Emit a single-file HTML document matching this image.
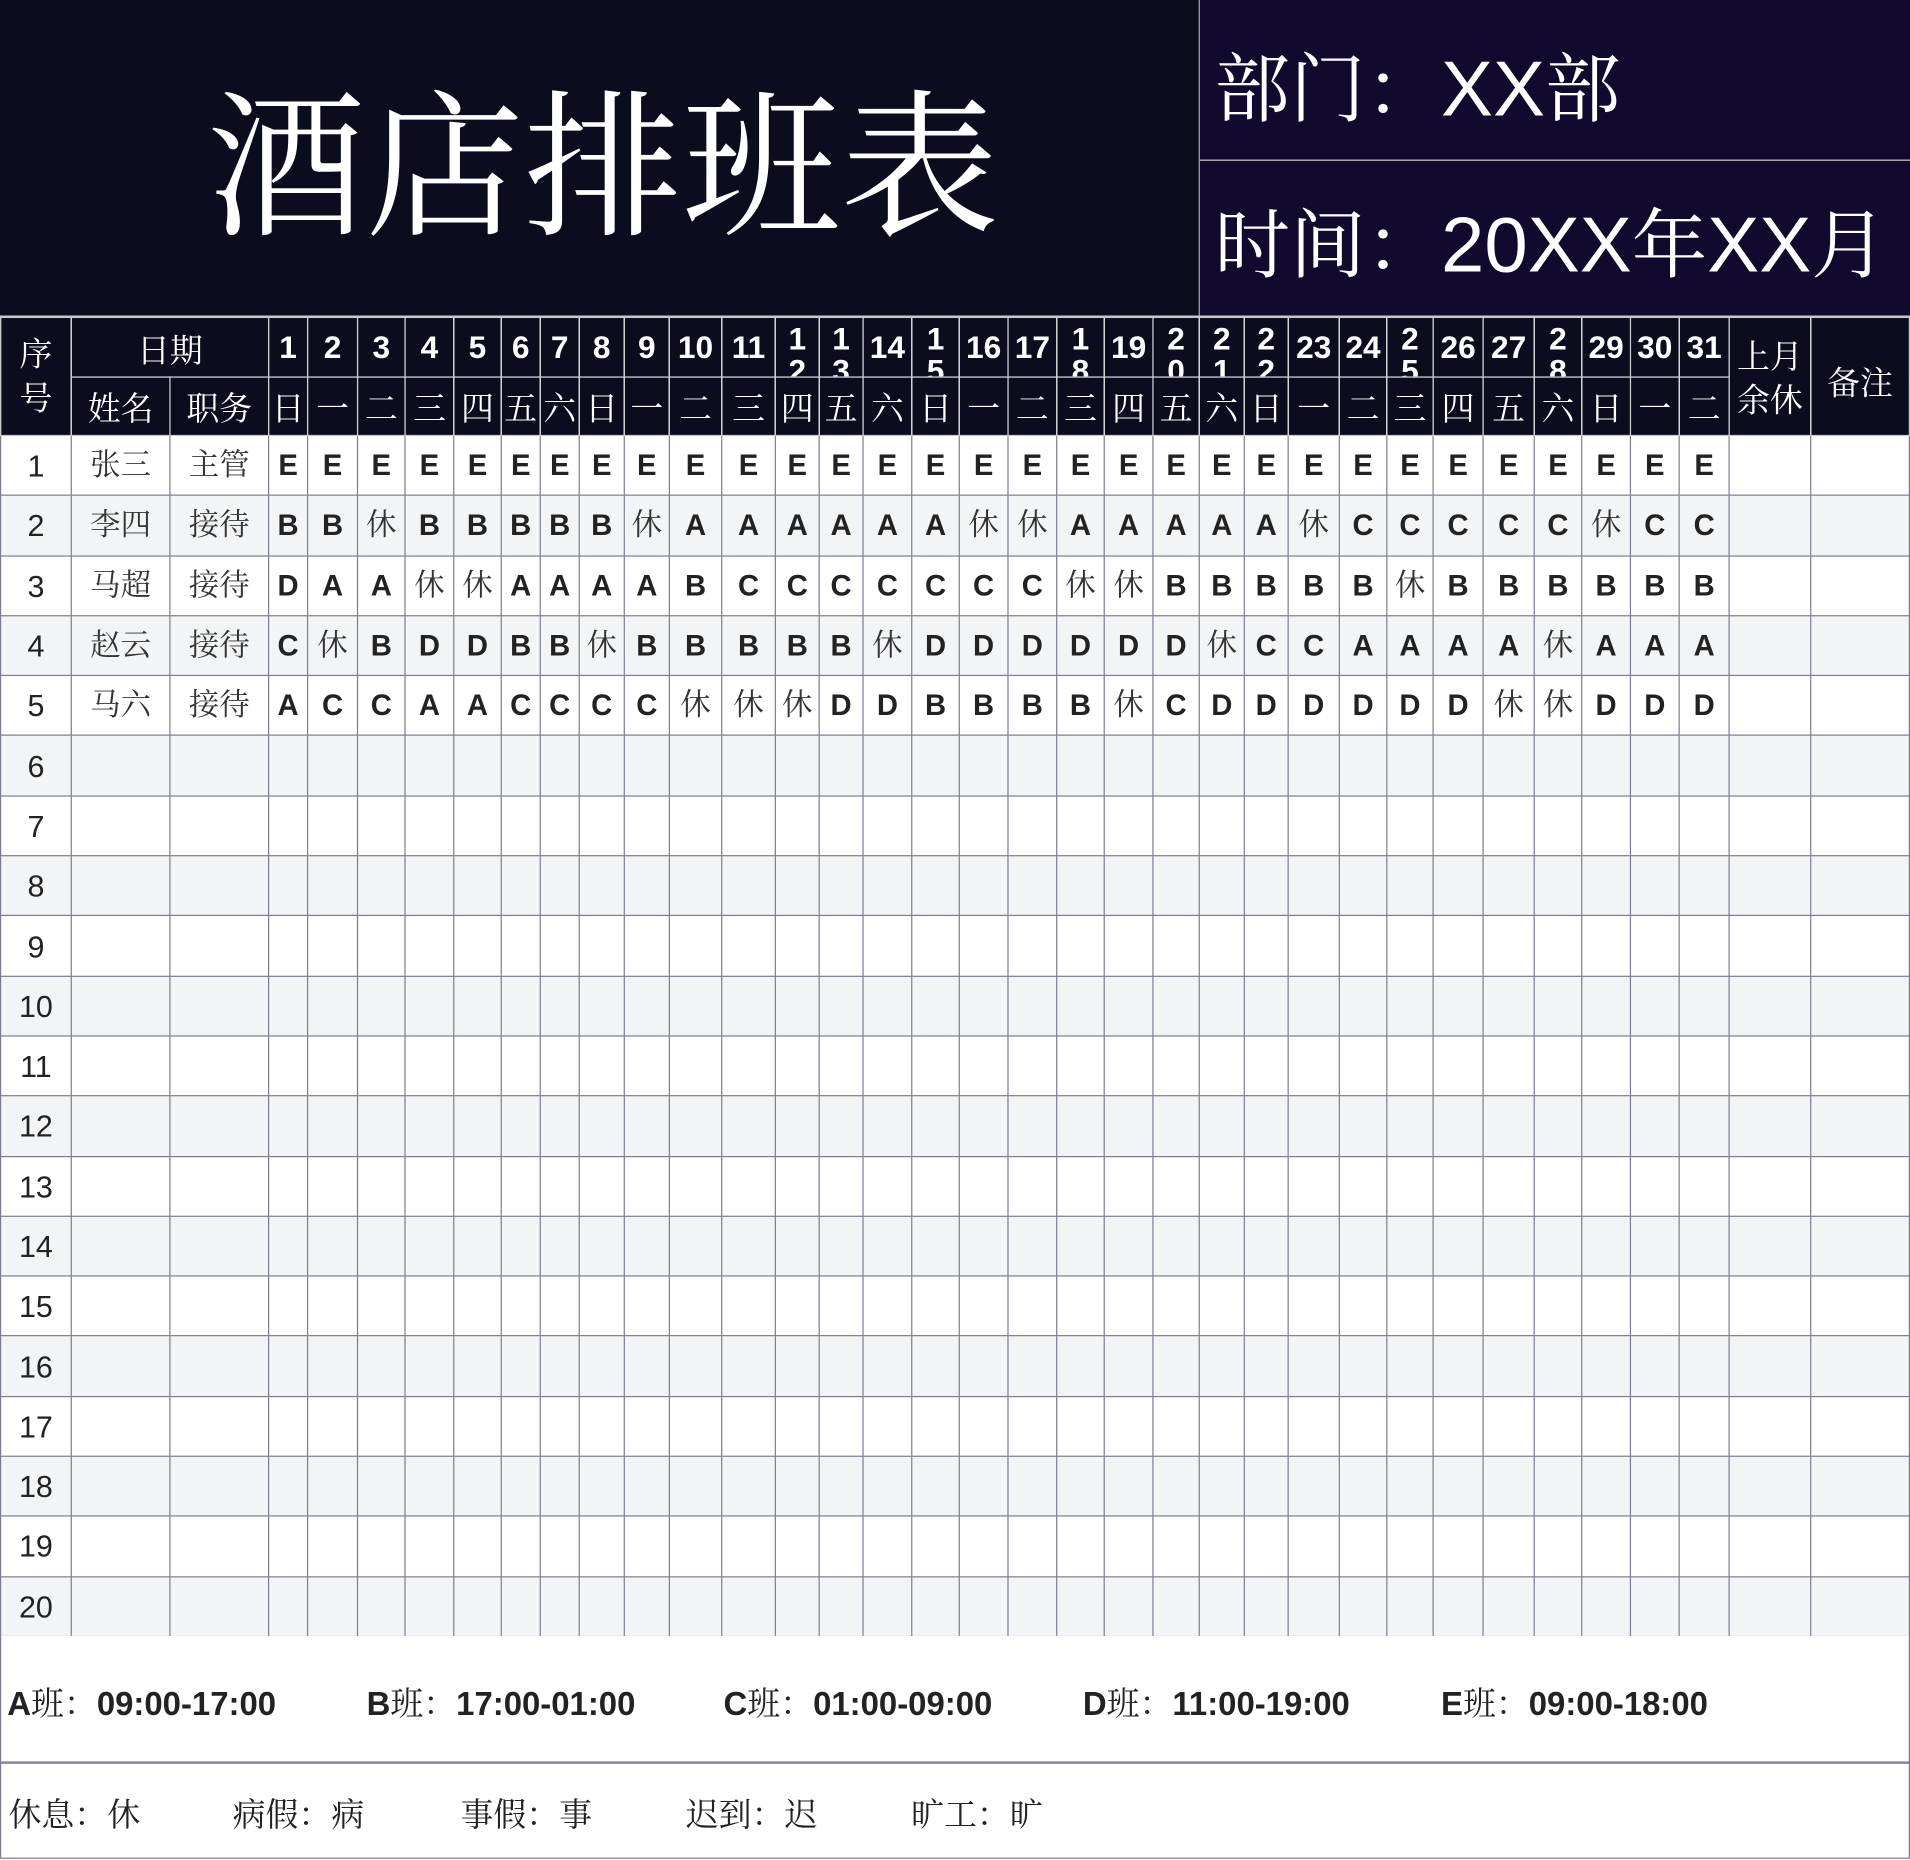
<!DOCTYPE html>
<html><head><meta charset="utf-8"><style>
html,body{margin:0;padding:0;background:#fff;overflow:hidden}
#w{position:absolute;left:0;top:0;width:1568px;height:1527px;transform:scale(1.21811);transform-origin:0 0;font-family:"Liberation Sans","Noto Sans CJK SC",sans-serif}
.s{font-family:"Liberation Serif","Noto Serif CJK SC",serif}
#top{position:absolute;left:0;top:0;width:1568px;height:259px;background:#0b0d1f;border-bottom:1px solid #ccc}
#right{position:absolute;left:984px;top:0;width:584px;height:259px;background:#110a2e;border-left:1px solid #aaa}
#right .l{position:absolute;left:0;top:131px;width:584px;height:1px;background:#ccc}
#title{position:absolute;left:150px;top:60px;width:690px;text-align:center;color:#fff;font-size:130px;line-height:160px;white-space:nowrap}
.rt{position:absolute;left:12px;color:#fff;font-size:62px;white-space:nowrap}
.rt b{font-family:"Liberation Sans",sans-serif;font-weight:normal;font-size:64px}
table{position:absolute;left:0;top:260px;border-collapse:collapse;table-layout:fixed;width:1568px}
td{padding:0;text-align:center;vertical-align:middle;overflow:hidden;white-space:nowrap;border:1px solid #7b7e92;color:#222}
thead td{background:#0b0d1f;color:#fff;border-color:#c9c9cf}
.h1 td{height:48px}
.h2 td{height:47px}
.dn{font-weight:bold;font-size:26px;font-family:"Liberation Sans",sans-serif}
.wd{font-size:27px}
.wr div{height:48px;overflow:hidden;line-height:26px;padding-top:4px;box-sizing:border-box;white-space:normal;font-weight:bold;font-size:26px}
tbody td{height:48.3px;font-size:24px;line-height:28px}
tbody td:not(:empty){padding-top:2px;height:46.3px}
tbody tr:nth-child(even) td{background:#f3f4f6}
tbody td.n{font-size:25px;font-family:"Liberation Sans",sans-serif}
tbody td.c{font-family:"Liberation Serif","Noto Serif CJK SC",serif;font-size:25px;color:#333}
tbody td.k{font-weight:bold;font-family:"Liberation Sans","Noto Sans CJK SC",sans-serif;font-size:24px}
#f1{position:absolute;left:0;top:1343px;width:1566px;height:103px;border:1px solid #7b7e92;border-top:none;background:#fff}
#f2{position:absolute;left:0;top:1447px;width:1566px;height:77px;border:1px solid #7b7e92;border-top:1px solid #7b7e92}
.fa{position:absolute;top:34px;font-size:27px;font-weight:bold;color:#222;white-space:nowrap}
.fa i{font-style:normal;font-weight:normal;font-family:"Liberation Serif","Noto Serif CJK SC",serif}
.fb{position:absolute;top:20px;font-size:27px;color:#222;white-space:nowrap;font-family:"Liberation Serif","Noto Serif CJK SC",serif}
</style></head><body><div id="w">
<div id="top"><div id="title" class="s">酒店排班表</div>
<div id="right"><div class="l"></div>
<div class="rt s" style="top:24px">部门：<b>XX</b>部</div>
<div class="rt s" style="top:152px">时间：<b>20XX</b>年<b>XX</b>月</div></div></div>

<table>
<colgroup><col style="width:58px"><col style="width:81px"><col style="width:81px"><col style="width:32px"><col style="width:41px"><col style="width:39px"><col style="width:40px"><col style="width:39px"><col style="width:32px"><col style="width:32px"><col style="width:37px"><col style="width:37px"><col style="width:43px"><col style="width:44px"><col style="width:36px"><col style="width:36px"><col style="width:40px"><col style="width:39px"><col style="width:40px"><col style="width:40px"><col style="width:39px"><col style="width:40px"><col style="width:38px"><col style="width:37px"><col style="width:36px"><col style="width:42px"><col style="width:39px"><col style="width:38px"><col style="width:41px"><col style="width:42px"><col style="width:39px"><col style="width:40px"><col style="width:40px"><col style="width:41px"><col style="width:67px"><col style="width:81px"></colgroup>
<thead>
<tr class="h1"><td rowspan="2" class="s" style="font-size:27px;line-height:36px;white-space:normal">序<br>号</td><td colspan="2" class="s" style="font-size:27px">日期</td>
<td class="dn">1</td><td class="dn">2</td><td class="dn">3</td><td class="dn">4</td><td class="dn">5</td><td class="dn">6</td><td class="dn">7</td><td class="dn">8</td><td class="dn">9</td><td class="dn">10</td><td class="dn">11</td><td class="wr"><div>1<br>2</div></td><td class="wr"><div>1<br>3</div></td><td class="dn">14</td><td class="wr"><div>1<br>5</div></td><td class="dn">16</td><td class="dn">17</td><td class="wr"><div>1<br>8</div></td><td class="dn">19</td><td class="wr"><div>2<br>0</div></td><td class="wr"><div>2<br>1</div></td><td class="wr"><div>2<br>2</div></td><td class="dn">23</td><td class="dn">24</td><td class="wr"><div>2<br>5</div></td><td class="dn">26</td><td class="dn">27</td><td class="wr"><div>2<br>8</div></td><td class="dn">29</td><td class="dn">30</td><td class="dn">31</td>
<td rowspan="2" class="s" style="font-size:27px;line-height:36px;white-space:normal;vertical-align:top;padding-top:14px">上月<br>余休</td><td rowspan="2" class="s" style="font-size:27px;vertical-align:top;padding-top:32px">备注</td></tr>
<tr class="h2 s"><td class="wd">姓名</td><td class="wd">职务</td>
<td class="wd">日</td><td class="wd">一</td><td class="wd">二</td><td class="wd">三</td><td class="wd">四</td><td class="wd">五</td><td class="wd">六</td><td class="wd">日</td><td class="wd">一</td><td class="wd">二</td><td class="wd">三</td><td class="wd">四</td><td class="wd">五</td><td class="wd">六</td><td class="wd">日</td><td class="wd">一</td><td class="wd">二</td><td class="wd">三</td><td class="wd">四</td><td class="wd">五</td><td class="wd">六</td><td class="wd">日</td><td class="wd">一</td><td class="wd">二</td><td class="wd">三</td><td class="wd">四</td><td class="wd">五</td><td class="wd">六</td><td class="wd">日</td><td class="wd">一</td><td class="wd">二</td></tr>
</thead>
<tbody>
<tr><td class="n">1</td><td class="c">张三</td><td class="c">主管</td><td class="k">E</td><td class="k">E</td><td class="k">E</td><td class="k">E</td><td class="k">E</td><td class="k">E</td><td class="k">E</td><td class="k">E</td><td class="k">E</td><td class="k">E</td><td class="k">E</td><td class="k">E</td><td class="k">E</td><td class="k">E</td><td class="k">E</td><td class="k">E</td><td class="k">E</td><td class="k">E</td><td class="k">E</td><td class="k">E</td><td class="k">E</td><td class="k">E</td><td class="k">E</td><td class="k">E</td><td class="k">E</td><td class="k">E</td><td class="k">E</td><td class="k">E</td><td class="k">E</td><td class="k">E</td><td class="k">E</td><td></td><td></td></tr>
<tr><td class="n">2</td><td class="c">李四</td><td class="c">接待</td><td class="k">B</td><td class="k">B</td><td class="c">休</td><td class="k">B</td><td class="k">B</td><td class="k">B</td><td class="k">B</td><td class="k">B</td><td class="c">休</td><td class="k">A</td><td class="k">A</td><td class="k">A</td><td class="k">A</td><td class="k">A</td><td class="k">A</td><td class="c">休</td><td class="c">休</td><td class="k">A</td><td class="k">A</td><td class="k">A</td><td class="k">A</td><td class="k">A</td><td class="c">休</td><td class="k">C</td><td class="k">C</td><td class="k">C</td><td class="k">C</td><td class="k">C</td><td class="c">休</td><td class="k">C</td><td class="k">C</td><td></td><td></td></tr>
<tr><td class="n">3</td><td class="c">马超</td><td class="c">接待</td><td class="k">D</td><td class="k">A</td><td class="k">A</td><td class="c">休</td><td class="c">休</td><td class="k">A</td><td class="k">A</td><td class="k">A</td><td class="k">A</td><td class="k">B</td><td class="k">C</td><td class="k">C</td><td class="k">C</td><td class="k">C</td><td class="k">C</td><td class="k">C</td><td class="k">C</td><td class="c">休</td><td class="c">休</td><td class="k">B</td><td class="k">B</td><td class="k">B</td><td class="k">B</td><td class="k">B</td><td class="c">休</td><td class="k">B</td><td class="k">B</td><td class="k">B</td><td class="k">B</td><td class="k">B</td><td class="k">B</td><td></td><td></td></tr>
<tr><td class="n">4</td><td class="c">赵云</td><td class="c">接待</td><td class="k">C</td><td class="c">休</td><td class="k">B</td><td class="k">D</td><td class="k">D</td><td class="k">B</td><td class="k">B</td><td class="c">休</td><td class="k">B</td><td class="k">B</td><td class="k">B</td><td class="k">B</td><td class="k">B</td><td class="c">休</td><td class="k">D</td><td class="k">D</td><td class="k">D</td><td class="k">D</td><td class="k">D</td><td class="k">D</td><td class="c">休</td><td class="k">C</td><td class="k">C</td><td class="k">A</td><td class="k">A</td><td class="k">A</td><td class="k">A</td><td class="c">休</td><td class="k">A</td><td class="k">A</td><td class="k">A</td><td></td><td></td></tr>
<tr><td class="n">5</td><td class="c">马六</td><td class="c">接待</td><td class="k">A</td><td class="k">C</td><td class="k">C</td><td class="k">A</td><td class="k">A</td><td class="k">C</td><td class="k">C</td><td class="k">C</td><td class="k">C</td><td class="c">休</td><td class="c">休</td><td class="c">休</td><td class="k">D</td><td class="k">D</td><td class="k">B</td><td class="k">B</td><td class="k">B</td><td class="k">B</td><td class="c">休</td><td class="k">C</td><td class="k">D</td><td class="k">D</td><td class="k">D</td><td class="k">D</td><td class="k">D</td><td class="k">D</td><td class="c">休</td><td class="c">休</td><td class="k">D</td><td class="k">D</td><td class="k">D</td><td></td><td></td></tr>
<tr><td class="n">6</td><td></td><td></td><td></td><td></td><td></td><td></td><td></td><td></td><td></td><td></td><td></td><td></td><td></td><td></td><td></td><td></td><td></td><td></td><td></td><td></td><td></td><td></td><td></td><td></td><td></td><td></td><td></td><td></td><td></td><td></td><td></td><td></td><td></td><td></td><td></td></tr>
<tr><td class="n">7</td><td></td><td></td><td></td><td></td><td></td><td></td><td></td><td></td><td></td><td></td><td></td><td></td><td></td><td></td><td></td><td></td><td></td><td></td><td></td><td></td><td></td><td></td><td></td><td></td><td></td><td></td><td></td><td></td><td></td><td></td><td></td><td></td><td></td><td></td><td></td></tr>
<tr><td class="n">8</td><td></td><td></td><td></td><td></td><td></td><td></td><td></td><td></td><td></td><td></td><td></td><td></td><td></td><td></td><td></td><td></td><td></td><td></td><td></td><td></td><td></td><td></td><td></td><td></td><td></td><td></td><td></td><td></td><td></td><td></td><td></td><td></td><td></td><td></td><td></td></tr>
<tr><td class="n">9</td><td></td><td></td><td></td><td></td><td></td><td></td><td></td><td></td><td></td><td></td><td></td><td></td><td></td><td></td><td></td><td></td><td></td><td></td><td></td><td></td><td></td><td></td><td></td><td></td><td></td><td></td><td></td><td></td><td></td><td></td><td></td><td></td><td></td><td></td><td></td></tr>
<tr><td class="n">10</td><td></td><td></td><td></td><td></td><td></td><td></td><td></td><td></td><td></td><td></td><td></td><td></td><td></td><td></td><td></td><td></td><td></td><td></td><td></td><td></td><td></td><td></td><td></td><td></td><td></td><td></td><td></td><td></td><td></td><td></td><td></td><td></td><td></td><td></td><td></td></tr>
<tr><td class="n">11</td><td></td><td></td><td></td><td></td><td></td><td></td><td></td><td></td><td></td><td></td><td></td><td></td><td></td><td></td><td></td><td></td><td></td><td></td><td></td><td></td><td></td><td></td><td></td><td></td><td></td><td></td><td></td><td></td><td></td><td></td><td></td><td></td><td></td><td></td><td></td></tr>
<tr><td class="n">12</td><td></td><td></td><td></td><td></td><td></td><td></td><td></td><td></td><td></td><td></td><td></td><td></td><td></td><td></td><td></td><td></td><td></td><td></td><td></td><td></td><td></td><td></td><td></td><td></td><td></td><td></td><td></td><td></td><td></td><td></td><td></td><td></td><td></td><td></td><td></td></tr>
<tr><td class="n">13</td><td></td><td></td><td></td><td></td><td></td><td></td><td></td><td></td><td></td><td></td><td></td><td></td><td></td><td></td><td></td><td></td><td></td><td></td><td></td><td></td><td></td><td></td><td></td><td></td><td></td><td></td><td></td><td></td><td></td><td></td><td></td><td></td><td></td><td></td><td></td></tr>
<tr><td class="n">14</td><td></td><td></td><td></td><td></td><td></td><td></td><td></td><td></td><td></td><td></td><td></td><td></td><td></td><td></td><td></td><td></td><td></td><td></td><td></td><td></td><td></td><td></td><td></td><td></td><td></td><td></td><td></td><td></td><td></td><td></td><td></td><td></td><td></td><td></td><td></td></tr>
<tr><td class="n">15</td><td></td><td></td><td></td><td></td><td></td><td></td><td></td><td></td><td></td><td></td><td></td><td></td><td></td><td></td><td></td><td></td><td></td><td></td><td></td><td></td><td></td><td></td><td></td><td></td><td></td><td></td><td></td><td></td><td></td><td></td><td></td><td></td><td></td><td></td><td></td></tr>
<tr><td class="n">16</td><td></td><td></td><td></td><td></td><td></td><td></td><td></td><td></td><td></td><td></td><td></td><td></td><td></td><td></td><td></td><td></td><td></td><td></td><td></td><td></td><td></td><td></td><td></td><td></td><td></td><td></td><td></td><td></td><td></td><td></td><td></td><td></td><td></td><td></td><td></td></tr>
<tr><td class="n">17</td><td></td><td></td><td></td><td></td><td></td><td></td><td></td><td></td><td></td><td></td><td></td><td></td><td></td><td></td><td></td><td></td><td></td><td></td><td></td><td></td><td></td><td></td><td></td><td></td><td></td><td></td><td></td><td></td><td></td><td></td><td></td><td></td><td></td><td></td><td></td></tr>
<tr><td class="n">18</td><td></td><td></td><td></td><td></td><td></td><td></td><td></td><td></td><td></td><td></td><td></td><td></td><td></td><td></td><td></td><td></td><td></td><td></td><td></td><td></td><td></td><td></td><td></td><td></td><td></td><td></td><td></td><td></td><td></td><td></td><td></td><td></td><td></td><td></td><td></td></tr>
<tr><td class="n">19</td><td></td><td></td><td></td><td></td><td></td><td></td><td></td><td></td><td></td><td></td><td></td><td></td><td></td><td></td><td></td><td></td><td></td><td></td><td></td><td></td><td></td><td></td><td></td><td></td><td></td><td></td><td></td><td></td><td></td><td></td><td></td><td></td><td></td><td></td><td></td></tr>
<tr><td class="n">20</td><td></td><td></td><td></td><td></td><td></td><td></td><td></td><td></td><td></td><td></td><td></td><td></td><td></td><td></td><td></td><td></td><td></td><td></td><td></td><td></td><td></td><td></td><td></td><td></td><td></td><td></td><td></td><td></td><td></td><td></td><td></td><td></td><td></td><td></td><td></td></tr>
</tbody></table>

<div id="f1">
<div class="fa" style="left:5px">A<i>班：</i>09:00-17:00</div>
<div class="fa" style="left:300px">B<i>班：</i>17:00-01:00</div>
<div class="fa" style="left:593px">C<i>班：</i>01:00-09:00</div>
<div class="fa" style="left:888px">D<i>班：</i>11:00-19:00</div>
<div class="fa" style="left:1182px">E<i>班：</i>09:00-18:00</div>
</div>
<div id="f2">
<div class="fb" style="left:6px">休息：休</div>
<div class="fb" style="left:190px">病假：病</div>
<div class="fb" style="left:377px">事假：事</div>
<div class="fb" style="left:562px">迟到：迟</div>
<div class="fb" style="left:747px">旷工：旷</div>
</div>
</div></body></html>
